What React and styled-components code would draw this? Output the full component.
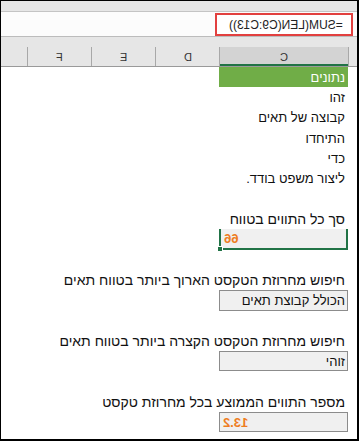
import React from "react";
import styled, { createGlobalStyle } from "styled-components";

const Global = createGlobalStyle`
  html, body { margin: 0; padding: 0; background: #fff; }
  body { font-family: "Liberation Sans", "DejaVu Sans", sans-serif; }
  * { box-sizing: border-box; }
`;

const Frame = styled.div`
  width: 359px;
  height: 441px;
  border: 1px solid #000;
  border-right-width: 2px;
  border-bottom-width: 2px;
  display: flex;
  flex-direction: column;
  overflow: hidden;
  background: #fff;
`;

const TopStrip = styled.div`
  height: 11px;
  background: #e6e6e6;
  border-bottom: 1px solid #c4c4c4;
`;

const FormulaBar = styled.div`
  height: 25px;
  background: #fcfcfc;
  border-bottom: 1px solid #bcbcbc;
  display: flex;
  justify-content: flex-end;
  align-items: flex-start;
  padding: 1px 4px 0 0;
`;

const FormulaBox = styled.div`
  width: 138px;
  height: 23px;
  border: 2px solid #e2403f;
  background: #fff;
  display: flex;
  align-items: center;
  justify-content: flex-end;
  padding-right: 8px;
  font-size: 12px;
  color: #222;
`;

const Mirror = styled.span`
  display: inline-block;
  transform: scaleX(-1);
  white-space: nowrap;
`;

const HeaderRow = styled.div`
  height: 30px;
  background: #e6e6e6;
  border-bottom: 1px solid #9a9a9a;
  display: flex;
  padding-top: 10px;
`;

const HeadCell = styled.div`
  width: ${(p) => p.$w}px;
  height: 19px;
  border-left: ${(p) => (p.$edge ? "none" : "1px solid #a8a8a8")};
  background: ${(p) => (p.$active ? "#d3d3d3" : "transparent")};
  box-shadow: ${(p) => (p.$active ? "inset 0 -2px 0 #217346" : "none")};
  display: flex;
  align-items: center;
  justify-content: center;
  font-size: 11px;
  color: #333;
`;

const Body = styled.div`
  flex: 1;
  display: flex;
  flex-direction: column;
  padding-right: 9px;
  direction: rtl;
`;

const Row = styled.div`
  height: 20.3px;
  display: flex;
  align-items: center;
  white-space: nowrap;
  padding-right: 3px;
  font-size: ${(p) => (p.$label ? "14px" : "13px")};
  color: #111;
`;

const GreenHead = styled(Row)`
  width: 129px;
  background: #70ad47;
  color: #fff;
`;

const ValueBox = styled.div`
  position: relative;
  width: 129px;
  height: 20.3px;
  background: #f0f0f0;
  border: 1px solid #8c8c8c;
  display: flex;
  align-items: center;
  justify-content: space-between;
  padding: 0 2px 0 3px;
  font-size: 13px;
  color: #111;
  white-space: nowrap;
`;

const SelectedBox = styled(ValueBox)`
  border: 2px solid #217346;
  border-top: none;
`;

const Num = styled(Mirror)`
  color: #ee7d22;
  font-weight: bold;
  font-size: 13px;
`;

const Handle = styled.span`
  position: absolute;
  left: -4px;
  bottom: -4px;
  width: 6px;
  height: 6px;
  background: #217346;
  border: 1px solid #fff;
`;

const Spacer = styled.div`
  height: 20.3px;
`;

export default function App() {
  return (
    <>
      <Global />
      <Frame>
        <TopStrip />
        <FormulaBar>
          <FormulaBox>
            <Mirror>=SUM(LEN(C9:C13))</Mirror>
          </FormulaBox>
        </FormulaBar>
        <HeaderRow>
          <HeadCell $w={26} $edge />
          <HeadCell $w={64}><Mirror>F</Mirror></HeadCell>
          <HeadCell $w={64}><Mirror>E</Mirror></HeadCell>
          <HeadCell $w={64}><Mirror>D</Mirror></HeadCell>
          <HeadCell $w={129} $active><Mirror>C</Mirror></HeadCell>
          <HeadCell $w={9} />
        </HeaderRow>
        <Body>
          <GreenHead>נתונים</GreenHead>
          <Row>זהו</Row>
          <Row>קבוצה של תאים</Row>
          <Row>התיחדו</Row>
          <Row>כדי</Row>
          <Row>ליצור משפט בודד.</Row>
          <Spacer />
          <Row $label>סך כל התווים בטווח</Row>
          <SelectedBox>
            <span />
            <Num>66</Num>
            <Handle />
          </SelectedBox>
          <Spacer />
          <Row $label>חיפוש מחרוזת הטקסט הארוך ביותר בטווח תאים</Row>
          <ValueBox>הכולל קבוצת תאים</ValueBox>
          <Spacer />
          <Row $label>חיפוש מחרוזת הטקסט הקצרה ביותר בטווח תאים</Row>
          <ValueBox>זוהי</ValueBox>
          <Spacer />
          <Row $label>מספר התווים הממוצע בכל מחרוזת טקסט</Row>
          <ValueBox>
            <span />
            <Num>13.2</Num>
          </ValueBox>
        </Body>
      </Frame>
    </>
  );
}
